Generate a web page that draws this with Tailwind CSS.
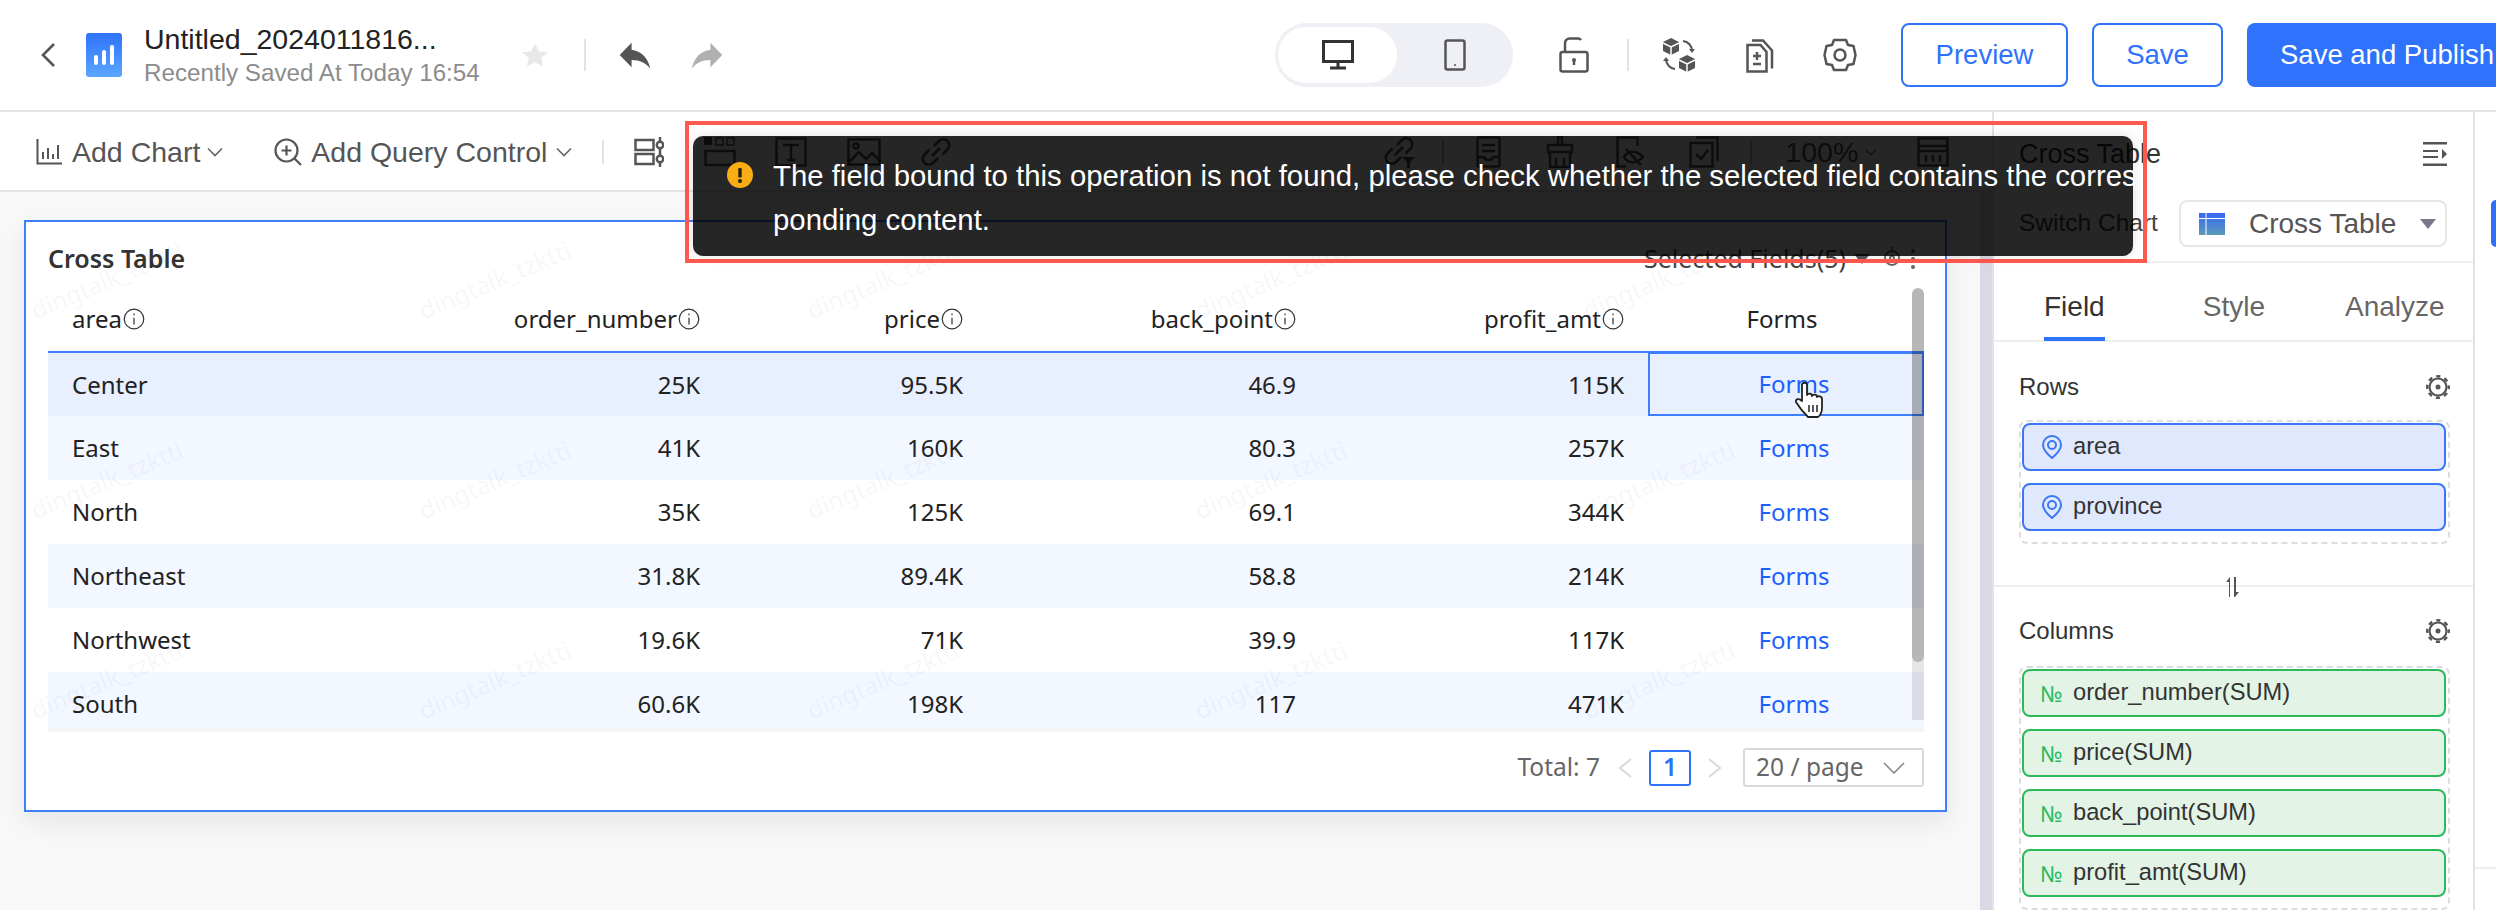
<!DOCTYPE html>
<html lang="en">
<head>
    <meta charset="UTF-8">
    <title>Cross Table</title>
    <script src="https://cdn.jsdelivr.net/npm/@tailwindcss/browser@4"></script>
</head>
<body class="relative w-[2496px] h-[910px] overflow-hidden bg-white font-['Liberation_Sans',sans-serif] text-[#333]">

<!-- top bar -->
<header class="flex items-center h-[112px] overflow-hidden border-b-2 border-[#e2e2e2] bg-white *:shrink-0">
    <svg class="ml-[40px] w-[16px] h-[26px]" viewBox="0 0 16 26" fill="none" stroke="#555" stroke-width="2.6"><path d="M14 2 3 13l11 11"/></svg>
    <svg class="ml-[30px] w-[36px] h-[44px]" viewBox="0 0 36 44">
        <defs><linearGradient id="logo" x1="0" y1="0" x2="0" y2="1"><stop offset="0" stop-color="#2f72fb"/><stop offset="1" stop-color="#5aa6ff"/></linearGradient></defs>
        <rect width="36" height="44" rx="3" fill="url(#logo)"/>
        <rect x="8" y="22" width="4" height="10" rx="2" fill="#fff"/><rect x="16" y="17" width="4" height="15" rx="2" fill="#fff"/><rect x="24" y="12" width="4" height="20" rx="2" fill="#fff"/>
    </svg>
    <div class="ml-[22px] w-[377px]">
        <div class="text-[28.500px] leading-[36px] text-[#222]">Untitled_2024011816...</div>
        <div class="text-[24.200px] leading-[32px] text-[#8c8c8c]">Recently Saved At Today 16:54</div>
    </div>
    <svg class="w-[28px] h-[26px]" viewBox="0 0 24 24" preserveAspectRatio="none" fill="#e8e8e8"><path d="M12 1.5 15.3 8.600 23 9.500 17.300 14.800 18.800 22.500 12 18.700 5.200 22.500 6.700 14.800 1 9.500 8.700 8.600z"/></svg>
    <div class="ml-[35px] w-[2px] h-[32px] bg-[#e2e2e2]"></div>
    <svg class="ml-[32px] w-[34px] h-[28px]" viewBox="2 4 20 16" preserveAspectRatio="none" fill="#555"><path d="M10 9V5l-7 7 7 7v-4.100c5 0 8.500 1.600 11 5.100-1-5-4-10-11-11z"/></svg>
    <svg class="ml-[38px] w-[34px] h-[28px]" viewBox="2 4 20 16" preserveAspectRatio="none" fill="#b0b0b0"><path d="M14 9V5l7 7-7 7v-4.100c-5 0-8.500 1.600-11 5.100 1-5 4-10 11-11z"/></svg>

    <div class="ml-[551px] flex items-center w-[238px] h-[64px] rounded-full bg-[#eff0f5] pl-[3px]">
        <div class="flex items-center justify-center w-[119px] h-[56px] rounded-full bg-white">
            <svg class="w-[32px] h-[30px]" viewBox="0 0 32 30" fill="none" stroke="#333" stroke-width="3"><rect x="1.500" y="1.500" width="29" height="20"/><path d="M16 22v5M8 28h16"/></svg>
        </div>
        <div class="flex items-center justify-center w-[116px]">
            <svg class="w-[22px] h-[32px]" viewBox="0 0 22 32" fill="none" stroke="#555" stroke-width="2.500"><rect x="1.500" y="1.500" width="19" height="29" rx="2"/><circle cx="11" cy="26" r="1" fill="#555" stroke="none"/></svg>
        </div>
    </div>
    <svg class="ml-[46px] w-[30px] h-[36px]" viewBox="0 0 30 36" fill="none" stroke="#555" stroke-width="2.500"><rect x="1.500" y="15" width="27" height="19.500" rx="2"/><path d="M6 15V6a4.500 4.500 0 0 1 4.500-4.500h9A4 4 0 0 1 22 3"/><circle cx="15" cy="23" r="2" fill="#555" stroke="none"/><path d="M15 24v4"/></svg>
    <div class="ml-[38px] w-[2px] h-[32px] bg-[#e2e2e2]"></div>
    <svg class="ml-[33px] w-[34px] h-[34px]" viewBox="0 0 34 34">
        <path d="M9 0 17 4v9l-8 4-8-4V4z" fill="#555"/><path d="M25 17l8 4v9l-8 4-8-4v-9z" fill="#555"/>
        <path d="M1 5l8 4 8-4M9 9v8M17 22l8 4 8-4M25 26v8" fill="none" stroke="#fff" stroke-width="1.500"/>
        <path d="M21 3a10 10 0 0 1 9 10M13 31a10 10 0 0 1-9-10" fill="none" stroke="#555" stroke-width="2"/>
        <path d="M27 11l3 4 3-4zM1 23l3-4 3 4z" fill="#555"/>
    </svg>
    <svg class="ml-[50px] w-[29px] h-[36px]" viewBox="0 0 29 36" fill="none" stroke="#555" stroke-width="2.500"><path d="M1.500 8h13l6 7v19.500h-19z"/><path d="M6 3.500h11l9 10v18"/><path d="M11 15v8M7 19h8M7 27h8"/></svg>
    <svg class="ml-[48px] w-[34px] h-[34px]" viewBox="0 0 34 34" fill="none" stroke="#555" stroke-width="2.500"><path d="M11 2h12l2 5 5.500 1 2 9-2 9-5.500 1-2 5H11l-2-5-5.500-1-2-9 2-9L9 7z" stroke-linejoin="round"/><circle cx="17" cy="17" r="5.500"/></svg>

    <button class="ml-[44px] w-[167px] h-[64px] rounded-[8px] border-2 border-[#2f72fb] text-[#2f72fb] text-[27.500px]">Preview</button>
    <button class="ml-[24px] w-[131px] h-[64px] rounded-[8px] border-2 border-[#2f72fb] text-[#2f72fb] text-[27.500px]">Save</button>
    <button class="ml-[24px] h-[64px] pl-[33px] pr-[40px] rounded-l-[8px] bg-[#2f72fb] text-white text-[27.500px] whitespace-nowrap">Save and Publish</button>
</header>

<div class="flex h-[798px]">
    <!-- editor column -->
    <main class="w-[1993px] shrink-0">
        <div class="flex items-center h-[80px] overflow-hidden border-b-2 border-[#e2e2e2] bg-white pt-[2px] text-[#555] text-[28.500px] *:shrink-0">
            <svg class="ml-[36px] w-[26px] h-[26px]" viewBox="0 0 26 26" fill="none" stroke="#555" stroke-width="2"><path d="M1.500 0v24.500H26M7 20v-7M12 20V9M17 20v-5M22 20V6"/></svg>
            <span class="ml-[10px]">Add Chart</span>
            <svg class="ml-[7px] w-[16px] h-[10px]" viewBox="0 0 16 10" fill="none" stroke="#666" stroke-width="1.600"><path d="M1 1.500 8 8.500 15 1.500"/></svg>
            <svg class="ml-[51px] w-[28px] h-[28px]" viewBox="0 0 28 28" fill="none" stroke="#555" stroke-width="2.200"><circle cx="12.500" cy="12.500" r="11"/><path d="M20.500 20.500 27 27M12.500 7.500v10M7.500 12.500h10"/></svg>
            <span class="ml-[9px]">Add Query Control</span>
            <svg class="ml-[9px] w-[16px] h-[10px]" viewBox="0 0 16 10" fill="none" stroke="#666" stroke-width="1.600"><path d="M1 1.500 8 8.500 15 1.500"/></svg>
            <div class="ml-[30px] w-[2px] h-[24px] bg-[#e2e2e2]"></div>
            <svg class="ml-[30px] w-[30px] h-[30px]" viewBox="0 0 30 30" fill="none" stroke="#555" stroke-width="2.500"><rect x="1.500" y="3" width="18" height="10"/><rect x="1.500" y="17" width="18" height="10"/><path d="M26 0v30"/><circle cx="26" cy="8" r="3.200" fill="#fff"/><circle cx="26" cy="22" r="3.200" fill="#fff"/></svg>
            <svg class="ml-[40px] w-[32px] h-[30px]" viewBox="0 0 32 30" fill="none" stroke="#555" stroke-width="2.500"><rect x="0" y="0" width="8" height="8" fill="#555" stroke="none"/><rect x="12" y="1" width="7" height="7" stroke-width="1.500"/><rect x="23" y="1" width="7" height="7" stroke-width="1.500"/><rect x="1.500" y="14" width="29" height="14"/></svg>
            <svg class="ml-[39px] w-[32px] h-[30px]" viewBox="0 0 32 30" fill="none" stroke="#555" stroke-width="2.500"><rect x="1.500" y="1.500" width="29" height="27"/><path d="M8 8h16M16 8v15M12 23h8"/></svg>
            <svg class="ml-[40px] w-[34px] h-[28px]" viewBox="0 0 34 28" fill="none" stroke="#555" stroke-width="2.500"><rect x="1.500" y="1.500" width="31" height="25"/><circle cx="9" cy="8" r="2.500"/><path d="M2 24 12 14l7 7 6-6 8 8"/></svg>
            <svg class="ml-[40px] w-[30px] h-[30px]" viewBox="0 0 30 30" fill="none" stroke="#555" stroke-width="2.500"><path d="M13 9l5-5a6 6 0 0 1 8.500 8.500l-5 5M17 21l-5 5a6 6 0 0 1-8.500-8.500l5-5M11 19l8-8"/></svg>
            <svg class="ml-[433px] w-[32px] h-[32px]" viewBox="0 0 32 32" fill="none" stroke="#555" stroke-width="2.500"><path d="M13 9l5-5a6 6 0 0 1 8.500 8.500l-5 5M17 21l-5 5a6 6 0 0 1-8.500-8.500l5-5M11 19l8-8"/><path d="M18 21h13l-5 5v6h-3v-6z" fill="#555" stroke="none"/></svg>
            <div class="ml-[26px] w-[2px] h-[24px] bg-[#555]/40"></div>
            <svg class="ml-[32px] w-[25px] h-[32px]" viewBox="0 0 25 32" fill="none" stroke="#555" stroke-width="2.500"><rect x="1.500" y="1.500" width="22" height="29" rx="1"/><path d="M6 9h13M6 15h13M2 21h6c1 4 8 4 9 0h6"/></svg>
            <svg class="ml-[44px] w-[30px] h-[32px]" viewBox="0 0 30 32" fill="none" stroke="#555" stroke-width="2.500"><path d="M13 8V1h4v7M3 9h24v7H3zM5 16v15h20V16M11 22v9M19 22v9"/></svg>
            <svg class="ml-[41px] w-[28px] h-[32px]" viewBox="0 0 28 32" fill="none" stroke="#555" stroke-width="2.500"><path d="M10 30.500H1.500v-29h20V10"/><path d="M8 21c4-7 13-7 19 0-6 7-15 7-19 0zM10 13l15 16"/></svg>
            <svg class="ml-[45px] w-[30px] h-[32px]" viewBox="0 0 30 32" fill="none" stroke="#555" stroke-width="2.500"><rect x="1.500" y="7" width="22" height="23.500"/><path d="M7 1.500h21.500V25M7 18l5 5 7-9"/></svg>
            <div class="ml-[31px] w-[2px] h-[24px] bg-[#555]/40"></div>
            <span class="ml-[33px]">100%</span>
            <svg class="ml-[7px] w-[12px] h-[8px]" viewBox="0 0 16 10" fill="none" stroke="#666" stroke-width="1.600"><path d="M1 1.500 8 8.500 15 1.500"/></svg>
            <svg class="ml-[40px] w-[32px] h-[30px]" viewBox="0 0 32 30" fill="none" stroke="#555" stroke-width="2.500"><rect x="1.500" y="1.500" width="29" height="27"/><path d="M1.500 9h29M1.500 14h29M9 18v7M16 18v7M23 18v7"/></svg>
        </div>

        <div class="flex h-[718px]">
            <div class="w-[1980px] bg-[#f8f8f8] pt-[28px] pl-[24px]">
                <section class="relative w-[1923px] h-[592px] border-2 border-[#3f7ffb] bg-white px-[22px] shadow-[0_10px_24px_rgba(0,0,0,0.08)] font-['Noto_Sans',sans-serif] text-[#222]">
                    <div class="flex items-center justify-between h-[66px] pt-[8px]">
                        <h2 class="text-[25px] font-semibold text-[#333]">Cross Table</h2>
                        <div class="flex items-center mr-[8px] text-[25px] text-[#444]">
                            <span>Selected Fields(5)</span>
                            <svg class="ml-[8px] w-[16px] h-[10px]" viewBox="0 0 16 10" fill="#556"><path d="M0 0h16L8 10z"/></svg>
                            <svg class="ml-[11px] w-[22px] h-[24px]" viewBox="0 0 22 24" fill="none" stroke="#666" stroke-width="1.800"><circle cx="11" cy="11" r="7"/><circle cx="11" cy="11" r="2"/><path d="M11 0v5"/></svg>
                            <svg class="ml-[8px] w-[4px] h-[20px]" viewBox="0 0 4 20" fill="#666"><circle cx="2" cy="2" r="2"/><circle cx="2" cy="10" r="2"/><circle cx="2" cy="18" r="2"/></svg>
                        </div>
                    </div>

                    <div class="relative w-[1876px]">
                        <div class="grid grid-cols-[276px_400px_263px_333px_328px_276px] items-center h-[63px] pb-[2px] text-[24px] text-[#222]">
                            <div class="flex items-center pl-[24px]">area<svg class="ml-[1px] w-[22px] h-[22px]" viewBox="0 0 18 18" fill="none" stroke="#333" stroke-width="1"><circle cx="9" cy="9" r="8"/><path d="M9 8v5.500M9 4.500v1.500"/></svg></div>
                            <div class="flex items-center justify-end pr-[24px]">order_number<svg class="ml-[1px] w-[22px] h-[22px]" viewBox="0 0 18 18" fill="none" stroke="#333" stroke-width="1"><circle cx="9" cy="9" r="8"/><path d="M9 8v5.500M9 4.500v1.500"/></svg></div>
                            <div class="flex items-center justify-end pr-[24px]">price<svg class="ml-[1px] w-[22px] h-[22px]" viewBox="0 0 18 18" fill="none" stroke="#333" stroke-width="1"><circle cx="9" cy="9" r="8"/><path d="M9 8v5.500M9 4.500v1.500"/></svg></div>
                            <div class="flex items-center justify-end pr-[24px]">back_point<svg class="ml-[1px] w-[22px] h-[22px]" viewBox="0 0 18 18" fill="none" stroke="#333" stroke-width="1"><circle cx="9" cy="9" r="8"/><path d="M9 8v5.500M9 4.500v1.500"/></svg></div>
                            <div class="flex items-center justify-end pr-[24px]">profit_amt<svg class="ml-[1px] w-[22px] h-[22px]" viewBox="0 0 18 18" fill="none" stroke="#333" stroke-width="1"><circle cx="9" cy="9" r="8"/><path d="M9 8v5.500M9 4.500v1.500"/></svg></div>
                            <div class="text-center pr-[8px]">Forms</div>
                        </div>
                        <div class="h-[377px] overflow-hidden border-t-2 border-[#3f7ffb] text-[24px] text-[#222]">
                            <div class="grid grid-cols-[276px_400px_263px_333px_328px_276px] items-center h-[63px] bg-[#e8effe]">
                                <div class="pl-[24px]">Center</div><div class="text-right pr-[24px]">25K</div><div class="text-right pr-[24px]">95.5K</div><div class="text-right pr-[24px]">46.9</div><div class="text-right pr-[24px]">115K</div>
                                <div class="flex items-center justify-center h-[64px] -mt-[1px] pl-[16px] border-2 border-[#3f7ffb] text-[#1f5eff]">Forms</div>
                            </div>
                            <div class="grid grid-cols-[276px_400px_263px_333px_328px_276px] items-center h-[64px] bg-[#f3f7ff]">
                                <div class="pl-[24px]">East</div><div class="text-right pr-[24px]">41K</div><div class="text-right pr-[24px]">160K</div><div class="text-right pr-[24px]">80.3</div><div class="text-right pr-[24px]">257K</div><div class="text-center pl-[16px] text-[#1f5eff]">Forms</div>
                            </div>
                            <div class="grid grid-cols-[276px_400px_263px_333px_328px_276px] items-center h-[64px] bg-white">
                                <div class="pl-[24px]">North</div><div class="text-right pr-[24px]">35K</div><div class="text-right pr-[24px]">125K</div><div class="text-right pr-[24px]">69.1</div><div class="text-right pr-[24px]">344K</div><div class="text-center pl-[16px] text-[#1f5eff]">Forms</div>
                            </div>
                            <div class="grid grid-cols-[276px_400px_263px_333px_328px_276px] items-center h-[64px] bg-[#f3f7ff]">
                                <div class="pl-[24px]">Northeast</div><div class="text-right pr-[24px]">31.8K</div><div class="text-right pr-[24px]">89.4K</div><div class="text-right pr-[24px]">58.8</div><div class="text-right pr-[24px]">214K</div><div class="text-center pl-[16px] text-[#1f5eff]">Forms</div>
                            </div>
                            <div class="grid grid-cols-[276px_400px_263px_333px_328px_276px] items-center h-[64px] bg-white">
                                <div class="pl-[24px]">Northwest</div><div class="text-right pr-[24px]">19.6K</div><div class="text-right pr-[24px]">71K</div><div class="text-right pr-[24px]">39.9</div><div class="text-right pr-[24px]">117K</div><div class="text-center pl-[16px] text-[#1f5eff]">Forms</div>
                            </div>
                            <div class="grid grid-cols-[276px_400px_263px_333px_328px_276px] items-center h-[64px] bg-[#f3f7ff]">
                                <div class="pl-[24px]">South</div><div class="text-right pr-[24px]">60.6K</div><div class="text-right pr-[24px]">198K</div><div class="text-right pr-[24px]">117</div><div class="text-right pr-[24px]">471K</div><div class="text-center pl-[16px] text-[#1f5eff]">Forms</div>
                            </div>
                        </div>
                        <div class="h-[4px] bg-[#f5f5f5]"></div>
                        <!-- scrollbar over the table -->
                        <div class="absolute right-0 top-0 w-[12px] h-[432px] bg-black/10 rounded-t-[6px]">
                            <div class="h-[374px] rounded-[6px] bg-black/20"></div>
                        </div>
                    </div>

                    <div class="flex items-center justify-end w-[1876px] mt-[16px] h-[39px] text-[24.500px] text-[#666]">
                        <span>Total: 7</span>
                        <svg class="ml-[18px] w-[14px] h-[20px]" viewBox="0 0 14 20" fill="none" stroke="#d9d9d9" stroke-width="2"><path d="M13 1 2 10l11 9"/></svg>
                        <div class="ml-[17px] flex items-center justify-center w-[42px] h-[36px] rounded-[3px] border-2 border-[#2f72fb] font-semibold text-[#2f72fb]">1</div>
                        <svg class="ml-[17px] w-[14px] h-[20px]" viewBox="0 0 14 20" fill="none" stroke="#d9d9d9" stroke-width="2"><path d="M1 1l11 9-11 9"/></svg>
                        <div class="ml-[21px] flex items-center justify-between w-[181px] h-[39px] pl-[11px] pr-[17px] rounded-[3px] border-2 border-[#d9d9d9]">
                            <span>20 / page</span>
                            <svg class="w-[22px] h-[12px]" viewBox="0 0 22 12" fill="none" stroke="#888" stroke-width="1.600"><path d="M1 1l10 10L21 1"/></svg>
                        </div>
                    </div>

                    <!-- watermark -->
                    <div class="absolute -left-[5px] -top-[2px] w-[1923px] h-[590px] overflow-hidden pointer-events-none grid grid-cols-[repeat(5,388px)] grid-rows-[repeat(3,200px)] text-[24.500px] text-black/[0.05]">
                        <span class="self-center justify-self-start -rotate-[23deg] translate-x-[5px] translate-y-[-40px]">dingtalk_tzktti</span>
                        <span class="self-center justify-self-start -rotate-[23deg] translate-x-[5px] translate-y-[-40px]">dingtalk_tzktti</span>
                        <span class="self-center justify-self-start -rotate-[23deg] translate-x-[5px] translate-y-[-40px]">dingtalk_tzktti</span>
                        <span class="self-center justify-self-start -rotate-[23deg] translate-x-[5px] translate-y-[-40px]">dingtalk_tzktti</span>
                        <span class="self-center justify-self-start -rotate-[23deg] translate-x-[5px] translate-y-[-40px]">dingtalk_tzktti</span>
                        <span class="self-center justify-self-start -rotate-[23deg] translate-x-[5px] translate-y-[-40px]">dingtalk_tzktti</span>
                        <span class="self-center justify-self-start -rotate-[23deg] translate-x-[5px] translate-y-[-40px]">dingtalk_tzktti</span>
                        <span class="self-center justify-self-start -rotate-[23deg] translate-x-[5px] translate-y-[-40px]">dingtalk_tzktti</span>
                        <span class="self-center justify-self-start -rotate-[23deg] translate-x-[5px] translate-y-[-40px]">dingtalk_tzktti</span>
                        <span class="self-center justify-self-start -rotate-[23deg] translate-x-[5px] translate-y-[-40px]">dingtalk_tzktti</span>
                        <span class="self-center justify-self-start -rotate-[23deg] translate-x-[5px] translate-y-[-40px]">dingtalk_tzktti</span>
                        <span class="self-center justify-self-start -rotate-[23deg] translate-x-[5px] translate-y-[-40px]">dingtalk_tzktti</span>
                        <span class="self-center justify-self-start -rotate-[23deg] translate-x-[5px] translate-y-[-40px]">dingtalk_tzktti</span>
                        <span class="self-center justify-self-start -rotate-[23deg] translate-x-[5px] translate-y-[-40px]">dingtalk_tzktti</span>
                        <span class="self-center justify-self-start -rotate-[23deg] translate-x-[5px] translate-y-[-40px]">dingtalk_tzktti</span>
                    </div>

                    <!-- mouse pointer -->
                    <svg class="absolute left-[1769px] top-[160px] w-[32px] h-[36px]" viewBox="0 0 32 36" fill="#fff" stroke="#222" stroke-width="1.800" stroke-linejoin="round"><path d="M7 3c0-3 5-3 5 0v10c1-2 5-2 5 1 1-2 5-2 5 1 1-1.500 5-1 5 2v9c0 4-2 8-4 9H13c-2-2-9-10-12-15-1-3 3-4 6-1z"/><path d="M14 23v7M18 23v7M22 23v7" stroke-width="1.500"/></svg>
                </section>
            </div>
            <div class="w-[13px] bg-[#d8d9e4]"></div>
        </div>
    </main>

    <!-- settings panel -->
    <aside class="w-[483px] shrink-0 border-l-2 border-r-2 border-[#e2e2e2] bg-white -ml-[1px]">
        <div class="h-[151px] border-b-2 border-[#eeeeee] pl-[25px] pr-[26px]">
            <div class="flex items-center justify-between h-[82px] pt-[2px]">
                <span class="text-[27px] text-[#333]">Cross Table</span>
                <svg class="w-[24px] h-[24px]" viewBox="0 0 24 24" fill="#555"><rect width="24" height="2.500"/><rect y="21.500" width="24" height="2.500"/><rect y="8" width="15" height="2"/><rect y="14" width="15" height="2"/><path d="M19 7l5 5-5 5z"/></svg>
            </div>
            <div class="flex items-center justify-between h-[47px] mt-[6px]">
                <span class="text-[24.500px] text-[#444]">Switch Chart</span>
                <div class="flex items-center w-[268px] h-[47px] rounded-[8px] border-2 border-[#e6e6e6] pl-[18px] pr-[8px] text-[28px] text-[#555]">
                    <svg class="w-[26px] h-[22px] shrink-0" viewBox="0 0 26 22"><defs><linearGradient id="tbl" x1="0" y1="0" x2="0" y2="1"><stop offset="0" stop-color="#3568f5"/><stop offset="1" stop-color="#5d9bb8"/></linearGradient></defs><rect width="26" height="22" fill="url(#tbl)"/><path d="M0 5.500h26M7 0v22" stroke="#fff" stroke-width="1"/></svg>
                    <span class="ml-[24px] whitespace-nowrap">Cross Table</span>
                    <svg class="ml-[24px] w-[16px] h-[10px] shrink-0" viewBox="0 0 16 10" fill="#77798a"><path d="M0 0h16L8 10z"/></svg>
                </div>
            </div>
        </div>
        <div class="flex h-[79px] items-center border-b-2 border-[#eeeeee] text-[28px] text-[#666]">
            <div class="ml-[50px] flex items-center h-[79px] border-b-4 border-[#2f72fb] text-[#333] pt-[14px]">Field</div>
            <div class="ml-[98px] pt-[10px]">Style</div>
            <div class="ml-[80px] pt-[10px]">Analyze</div>
        </div>

        <div class="relative h-[245px] border-b-2 border-[#eeeeee] pl-[25px] pt-[30px]">
            <div class="flex items-center justify-between w-[431px] h-[30px] text-[24px] text-[#333]">
                <span>Rows</span>
                <svg class="w-[24px] h-[24px]" viewBox="0 0 24 24" fill="none" stroke="#555"><circle cx="12" cy="12" r="8.500" stroke-width="2.200"/><circle cx="12" cy="12" r="10.800" stroke-width="2.400" stroke-dasharray="4.200 4.280" stroke-dashoffset="2.100"/><circle cx="12" cy="12" r="2.500" fill="#555" stroke="none"/></svg>
            </div>
            <div class="flex flex-col gap-[12px] w-[431px] h-[124px] mt-[18px] pl-[1px] pr-[2px] pt-[1px] rounded-[8px] border-2 border-dashed border-[#dddddd]">
                <div class="flex items-center h-[48px] rounded-[8px] border-2 border-[#3a76f6] bg-[#e0e8fd] pl-[18px] text-[23.700px] text-[#333]">
                    <svg class="w-[20px] h-[24px]" viewBox="0 0 20 24" fill="none" stroke="#3a76f6" stroke-width="2"><path d="M10 23C4 18 1 14 1 10a9 9 0 0 1 18 0c0 4-3 8-9 13z"/><circle cx="10" cy="10" r="4"/></svg>
                    <span class="ml-[11px]">area</span>
                </div>
                <div class="flex items-center h-[48px] rounded-[8px] border-2 border-[#3a76f6] bg-[#e0e8fd] pl-[18px] text-[23.700px] text-[#333]">
                    <svg class="w-[20px] h-[24px]" viewBox="0 0 20 24" fill="none" stroke="#3a76f6" stroke-width="2"><path d="M10 23C4 18 1 14 1 10a9 9 0 0 1 18 0c0 4-3 8-9 13z"/><circle cx="10" cy="10" r="4"/></svg>
                    <span class="ml-[11px]">province</span>
                </div>
            </div>
            <svg class="absolute left-[232px] -bottom-[12px] w-[14px] h-[20px]" viewBox="0 0 14 20" fill="#555"><path d="M3 20V5H0l4-5v20zM8 0h2v15h3l-4 5H8z"/></svg>
        </div>

        <div class="pl-[25px] pt-[29px]">
            <div class="flex items-center justify-between w-[431px] h-[30px] text-[24px] text-[#333]">
                <span>Columns</span>
                <svg class="w-[24px] h-[24px]" viewBox="0 0 24 24" fill="none" stroke="#555"><circle cx="12" cy="12" r="8.500" stroke-width="2.200"/><circle cx="12" cy="12" r="10.800" stroke-width="2.400" stroke-dasharray="4.200 4.280" stroke-dashoffset="2.100"/><circle cx="12" cy="12" r="2.500" fill="#555" stroke="none"/></svg>
            </div>
            <div class="flex flex-col gap-[12px] w-[431px] h-[244px] mt-[20px] pl-[1px] pr-[2px] pt-[1px] rounded-[8px] border-2 border-dashed border-[#dddddd]">
                <div class="flex items-center h-[48px] rounded-[8px] border-2 border-[#2bb95a] bg-[#e3f4e6] pl-[16px] text-[23.700px] text-[#333]">
                    <span class="w-[33px] font-['Noto_Sans',sans-serif] text-[22px] text-[#2bb95a]">№</span><span>order_number(SUM)</span>
                </div>
                <div class="flex items-center h-[48px] rounded-[8px] border-2 border-[#2bb95a] bg-[#e3f4e6] pl-[16px] text-[23.700px] text-[#333]">
                    <span class="w-[33px] font-['Noto_Sans',sans-serif] text-[22px] text-[#2bb95a]">№</span><span>price(SUM)</span>
                </div>
                <div class="flex items-center h-[48px] rounded-[8px] border-2 border-[#2bb95a] bg-[#e3f4e6] pl-[16px] text-[23.700px] text-[#333]">
                    <span class="w-[33px] font-['Noto_Sans',sans-serif] text-[22px] text-[#2bb95a]">№</span><span>back_point(SUM)</span>
                </div>
                <div class="flex items-center h-[48px] rounded-[8px] border-2 border-[#2bb95a] bg-[#e3f4e6] pl-[16px] text-[23.700px] text-[#333]">
                    <span class="w-[33px] font-['Noto_Sans',sans-serif] text-[22px] text-[#2bb95a]">№</span><span>profit_amt(SUM)</span>
                </div>
            </div>
        </div>
    </aside>

    <!-- collapsed side strip -->
    <div class="relative flex-1 bg-white">
        <div class="mt-[88px] ml-[16px] h-[47px] rounded-l-[8px] bg-[#2f6ffb]"></div>
        <div class="mt-[620px] h-[2px] bg-[#eeeeee]"></div>
    </div>
</div>

<!-- toast with the red annotation frame -->
<div class="absolute left-[685px] top-[121px] w-[1462px] h-[142px] border-4 border-[#ff5a4f] pl-[4px] pr-[10px] pt-[11px] pb-[3px]">
    <div class="flex w-[1440px] h-[120px] rounded-[10px] bg-black/85 shadow-[0_0_12px_rgba(0,0,0,0.12)] pl-[34px] pt-[18px] text-[29.350px] leading-[44px] text-white">
        <svg class="mt-[8px] w-[26px] h-[26px] shrink-0" viewBox="0 0 26 26"><circle cx="13" cy="13" r="13" fill="#faad14"/><rect x="11.300" y="6" width="3.400" height="9.500" rx="1.200" fill="#222"/><circle cx="13" cy="19" r="2" fill="#222"/></svg>
        <p class="ml-[20px] whitespace-nowrap">The field bound to this operation is not found, please check whether the selected field contains the corres<br>ponding content.</p>
    </div>
</div>

</body>
</html>
